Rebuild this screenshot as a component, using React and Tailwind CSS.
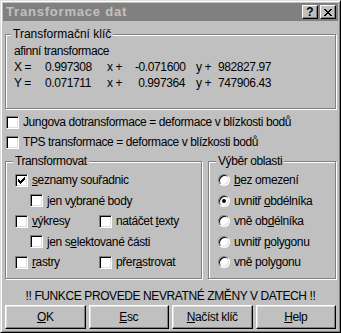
import React from 'react';

const FONT = { fontFamily: '"Liberation Sans", Arial, sans-serif' };

const U = ({ children }) => <span className="underline underline-offset-[1px]">{children}</span>;

// Win95 checkmark, 7x7 pixels
const CHECK_ROWS = ['......X', '.....XX', 'X...XXX', 'XX.XXX.', 'XXXXX..', '.XXX...', '..X....'];

const CheckMark = () => (
  <svg width="7" height="7" viewBox="0 0 7 7" shapeRendering="crispEdges">
    {CHECK_ROWS.flatMap((row, y) =>
      row.split('').map((c, x) => (c === 'X' ? <rect key={`${x}-${y}`} x={x} y={y} width="1" height="1" fill="#000" /> : null))
    )}
  </svg>
);

const CheckBox = ({ checked }) => (
  <span className="flex items-center justify-center w-[13px] h-[13px] shrink-0 bg-white border border-t-[#808080] border-l-[#808080] border-r-white border-b-white shadow-[inset_1px_1px_0_#000,inset_-1px_-1px_0_#dfdfdf]">
    {checked && <CheckMark />}
  </span>
);

const Radio = ({ checked }) => (
  <span className="flex items-center justify-center w-[12px] h-[12px] shrink-0 rounded-full bg-white border border-t-[#808080] border-l-[#808080] border-r-white border-b-white shadow-[inset_1px_1px_0_#000,inset_-1px_-1px_0_#dfdfdf]">
    {checked && <span className="w-[4px] h-[4px] rounded-full bg-black" />}
  </span>
);

const CheckRow = ({ checked, children, className = '' }) => (
  <div className={`flex items-center gap-[4px] ${className}`}>
    <CheckBox checked={checked} />
    <span className="whitespace-nowrap">{children}</span>
  </div>
);

const RadioRow = ({ checked, children }) => (
  <div className="flex items-center gap-[4px] h-[20.5px]">
    <Radio checked={checked} />
    <span className="whitespace-nowrap">{children}</span>
  </div>
);

const Group = ({ title, className = '', legendClass = '', children }) => (
  <fieldset className={`border border-[#808080] shadow-[inset_1px_1px_0_#fff,1px_1px_0_#fff] ${className}`}>
    <legend className={`bg-[#c0c0c0] px-[2px] leading-[14px] ${legendClass}`}>{title}</legend>
    {children}
  </fieldset>
);

const Button = ({ children }) => (
  <button className="h-[24px] bg-[#c0c0c0] border border-t-white border-l-white border-r-black border-b-black shadow-[inset_-1px_-1px_0_#808080,inset_1px_1px_0_#dfdfdf] text-black">
    {children}
  </button>
);

const CoefRow = ({ label, a, b, c }) => (
  <div className="flex h-[16px] items-center whitespace-nowrap">
    <span className="w-[31px]">{label}</span>
    <span className="w-[62px]">{a}</span>
    <span className="w-[28px]">x +</span>
    <span className="w-[50px] text-right">{b}</span>
    <span className="w-[22px] ml-[11px]">y +</span>
    <span>{c}</span>
  </div>
);

export default function App() {
  return (
    <div
      style={FONT}
      className="w-[341px] h-[333px] bg-[#c0c0c0] border border-t-[#dfdfdf] border-l-[#dfdfdf] border-r-black border-b-black shadow-[inset_1px_1px_0_#fff,inset_-1px_-1px_0_#808080] p-[2px] text-[12px] tracking-[-0.4px] text-black flex flex-col"
    >
      <div className="h-[18px] bg-[#808080] flex items-center justify-between pl-[3px] pr-[2px]">
        <span className="font-bold text-[13px] text-[#c0c0c0] tracking-[0.8px]">Transformace dat</span>
        <div className="flex gap-[2px]">
          <span className="w-[16px] h-[14px] flex items-center justify-center bg-[#c0c0c0] border border-t-white border-l-white border-r-black border-b-black shadow-[inset_-1px_-1px_0_#808080] font-bold text-[12px] tracking-normal leading-none">
            ?
          </span>
          <span className="w-[16px] h-[14px] flex items-center justify-center bg-[#c0c0c0] border border-t-white border-l-white border-r-black border-b-black shadow-[inset_-1px_-1px_0_#808080]">
            <svg width="8" height="7" viewBox="0 0 8 7" shapeRendering="crispEdges">
              <path d="M0 0h2v1h-2zM6 0h2v1h-2zM1 1h2v1h-2zM5 1h2v1h-2zM2 2h4v1h-4zM3 3h2v1h-2zM2 4h4v1h-4zM1 5h2v1h-2zM5 5h2v1h-2zM0 6h2v1h-2zM6 6h2v1h-2z" fill="#000" />
            </svg>
          </span>
        </div>
      </div>

      <div className="px-[2px] flex flex-col">
        <Group title="Transformační klíč" className="mt-[6px] pl-[8px] pt-[2px] pb-[17px]" legendClass="-ml-[3px] tracking-normal">
          <div className="h-[16px] leading-[16px]">afinní transformace</div>
          <CoefRow label="X =" a="0.997308" b="-0.071600" c="982827.97" />
          <CoefRow label="Y =" a="0.071711" b="0.997364" c="747906.43" />
        </Group>

        <CheckRow className="h-[20px] mt-[3px] pl-[1px]">Jungova dotransformace = deformace v blízkosti bodů</CheckRow>
        <CheckRow className="h-[20px] pl-[1px]">TPS transformace = deformace v blízkosti bodů</CheckRow>

        <div className="flex gap-[6px] mt-[2px]">
          <Group title="Transformovat" className="w-[197px] h-[125px] pl-[9px] pt-[2px]" legendClass="-ml-[2px]">
            <CheckRow checked className="h-[20.5px]">
              <U>s</U>eznamy souřadnic
            </CheckRow>
            <CheckRow className="h-[20.5px] pl-[15px]">
              jen v<U>y</U>brané body
            </CheckRow>
            <div className="flex h-[20.5px]">
              <CheckRow className="w-[84px]">
                <U>v</U>ýkresy
              </CheckRow>
              <CheckRow>
                natáčet <U>t</U>exty
              </CheckRow>
            </div>
            <CheckRow className="h-[20.5px] pl-[15px]">
              jen s<U>e</U>lektované části
            </CheckRow>
            <div className="flex h-[20.5px]">
              <CheckRow className="w-[84px]">
                <U>r</U>astry
              </CheckRow>
              <CheckRow>
                přer<U>a</U>strovat
              </CheckRow>
            </div>
          </Group>

          <Group title="Výběr oblasti" className="w-[128px] h-[125px] pl-[9px] pt-[2px]" legendClass="-ml-[2px]">
            <RadioRow>
              <U>b</U>ez omezení
            </RadioRow>
            <RadioRow checked>
              uvnitř <U>o</U>bdélníka
            </RadioRow>
            <RadioRow>
              vně ob<U>d</U>élníka
            </RadioRow>
            <RadioRow>
              uvnitř <U>p</U>olygonu
            </RadioRow>
            <RadioRow>
              vně poly<U>g</U>onu
            </RadioRow>
          </Group>
        </div>

        <div className="mt-[10px] h-[14px] leading-[14px] text-center">!! FUNKCE PROVEDE NEVRATNÉ ZMĚNY V DATECH !!</div>

        <div className="grid grid-cols-4 gap-[3px] mt-[2px]">
          <Button>
            <U>O</U>K
          </Button>
          <Button>
            <U>E</U>sc
          </Button>
          <Button>
            <U>N</U>ačíst klíč
          </Button>
          <Button>
            <U>H</U>elp
          </Button>
        </div>
      </div>
    </div>
  );
}
